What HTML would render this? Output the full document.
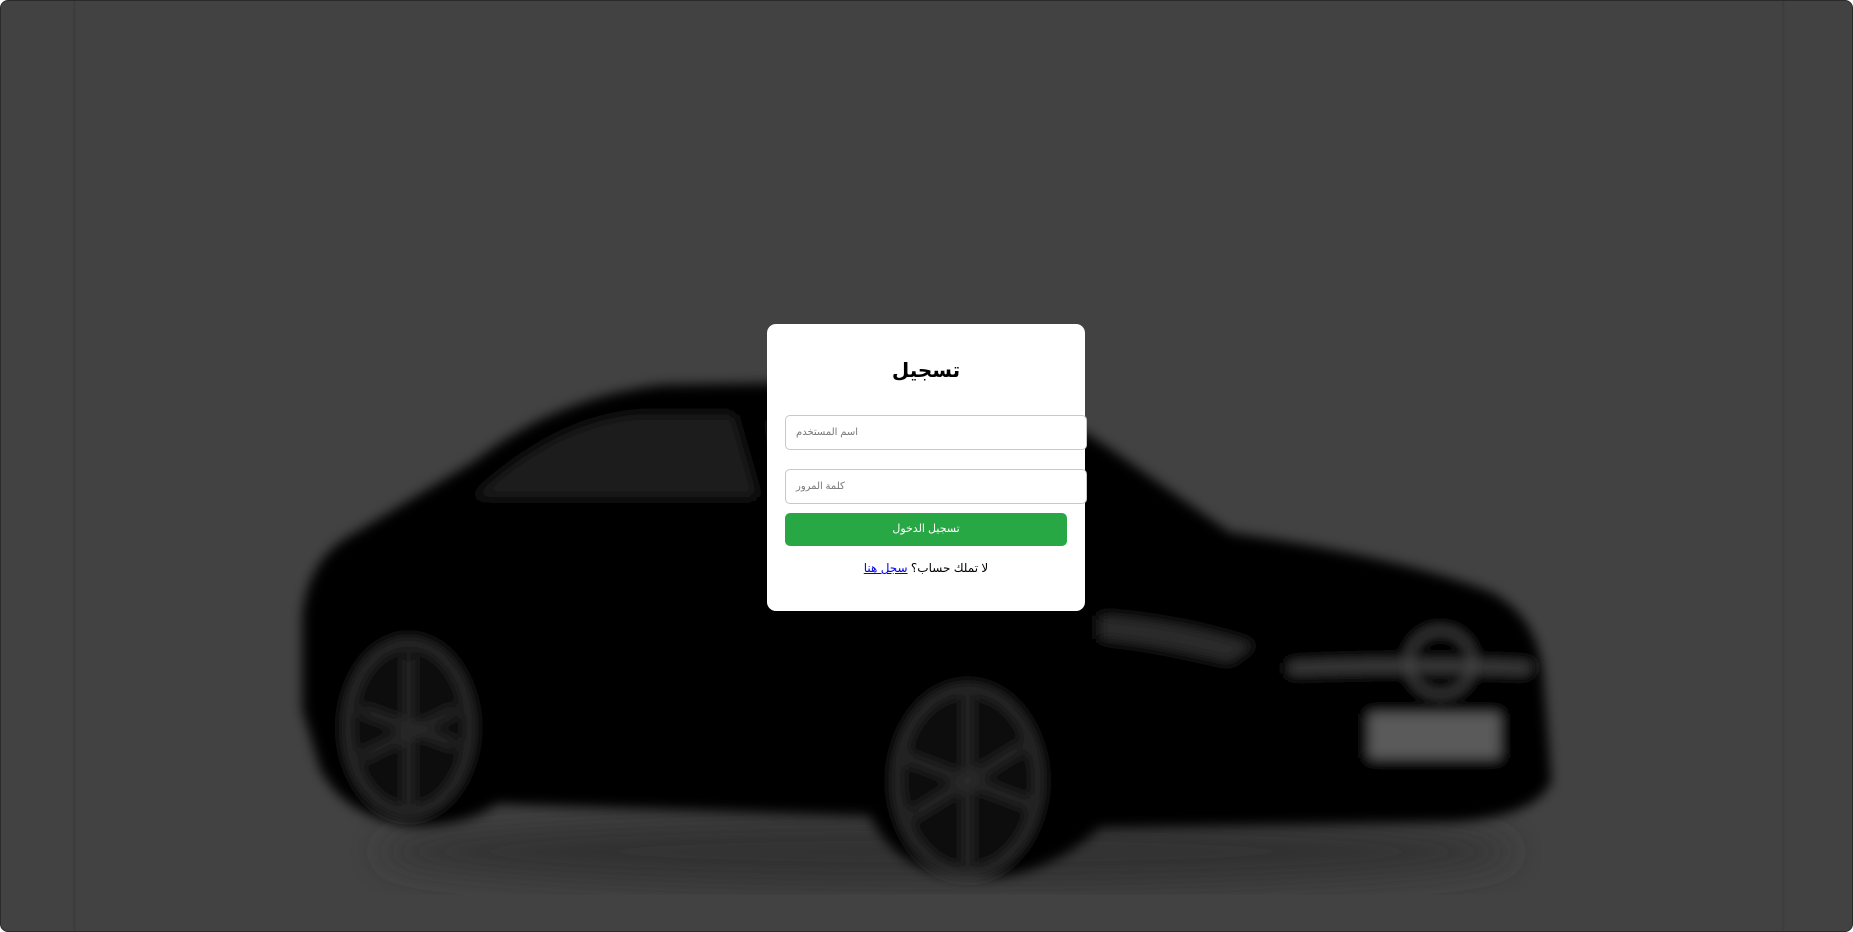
<!DOCTYPE html>
<html lang="ar"><head><meta charset="utf-8">
<style>
html,body{margin:0;padding:0;width:1853px;height:932px;overflow:hidden;background:#fff;font-family:"Liberation Sans","DejaVu Sans",sans-serif}
.frame{position:absolute;left:0;top:0;width:1851px;height:930px;border:1px solid #2a2a2a;border-radius:8px;background:#424242;overflow:hidden}
svg.bg{position:absolute;left:0;top:0}
.card{position:absolute;left:767px;top:324px;width:318px;height:287px;background:#fff;border-radius:9px}
.inp{position:absolute;left:785px;width:290px;padding-left:10px;height:33px;border:1px solid #c8c8c8;border-radius:5px;background:#fff;font-size:10px;color:#777;line-height:33px;direction:rtl;text-align:left}
.btn{position:absolute;left:785px;top:513px;width:282px;height:33px;background:#28a745;border-radius:5px;color:#fff;font-size:11px;text-align:center;line-height:33px;direction:rtl}
.link{position:absolute;left:767px;width:318px;top:561px;text-align:center;font-size:12px;color:#000;direction:rtl}
.link a{color:#00e;text-decoration:underline}
</style></head><body>
<div class="frame">
<svg class="bg" width="1853" height="932" viewBox="0 0 1568 789" preserveAspectRatio="none">
<defs><filter id="b" x="-10%" y="-10%" width="120%" height="120%"><feGaussianBlur stdDeviation="5"/></filter>
<filter id="b2"><feGaussianBlur stdDeviation="14"/></filter></defs>
<line x1="62" y1="0" x2="62" y2="789" stroke="#3d3d3d" stroke-width="2"/>
<line x1="1508" y1="0" x2="1508" y2="789" stroke="#3d3d3d" stroke-width="2"/>
<ellipse cx="800" cy="720" rx="480" ry="30" fill="#333" filter="url(#b2)"/>
<g filter="url(#b)">
<path d="M255,520 Q260,470 300,450 L400,390 Q470,335 560,325 L760,322 Q860,325 940,380 L1040,450 Q1180,470 1260,500 Q1300,520 1305,570 L1312,660 Q1300,690 1230,695 L930,700 Q880,745 820,742 Q760,740 735,690 L420,680 Q390,700 345,698 Q290,690 270,650 L255,600 Z" fill="#050505"/>
<path d="M400,420 Q470,355 540,350 L620,350 L640,420 Z" fill="#1e1e1e"/>
<path d="M650,355 L760,350 Q840,360 900,430 L660,425 Z" fill="#1a1a1a"/>
<path d="M1090,560 Q1200,555 1295,560 L1293,570 Q1200,566 1090,570 Z" fill="#3a3a3a"/>
<circle cx="1218" cy="560" r="27" fill="none" stroke="#4a4a4a" stroke-width="4"/>
<rect x="1158" y="603" width="110" height="38" fill="#5a5a5a"/>
<ellipse cx="345" cy="615" rx="52" ry="72" fill="#111" stroke="#2c2c2c" stroke-width="8"/>
<ellipse cx="818" cy="660" rx="60" ry="78" fill="#111" stroke="#2c2c2c" stroke-width="8"/>
<path d="M818,590 L818,730 M765,640 L870,680 M770,690 L866,630 M345,555 L345,680 M305,600 L385,630 M305,640 L385,600" stroke="#2a2a2a" stroke-width="7"/>
<path d="M930,520 Q1000,525 1060,545 L1040,560 Q980,545 930,540 Z" fill="#2a2a2a"/>
</g>
</svg>
</div>
<div class="card"></div>
<h2 style="position:absolute;left:767px;width:318px;top:358px;margin:0;text-align:center;font-size:20px;font-weight:bold;direction:rtl">تسجيل</h2>
<div class="inp" style="top:415px">اسم المستخدم</div>
<div class="inp" style="top:469px">كلمة المرور</div>
<div class="btn">تسجيل الدخول</div>
<div class="link">لا تملك حساب؟ <a>سجل هنا</a></div>
</body></html>
